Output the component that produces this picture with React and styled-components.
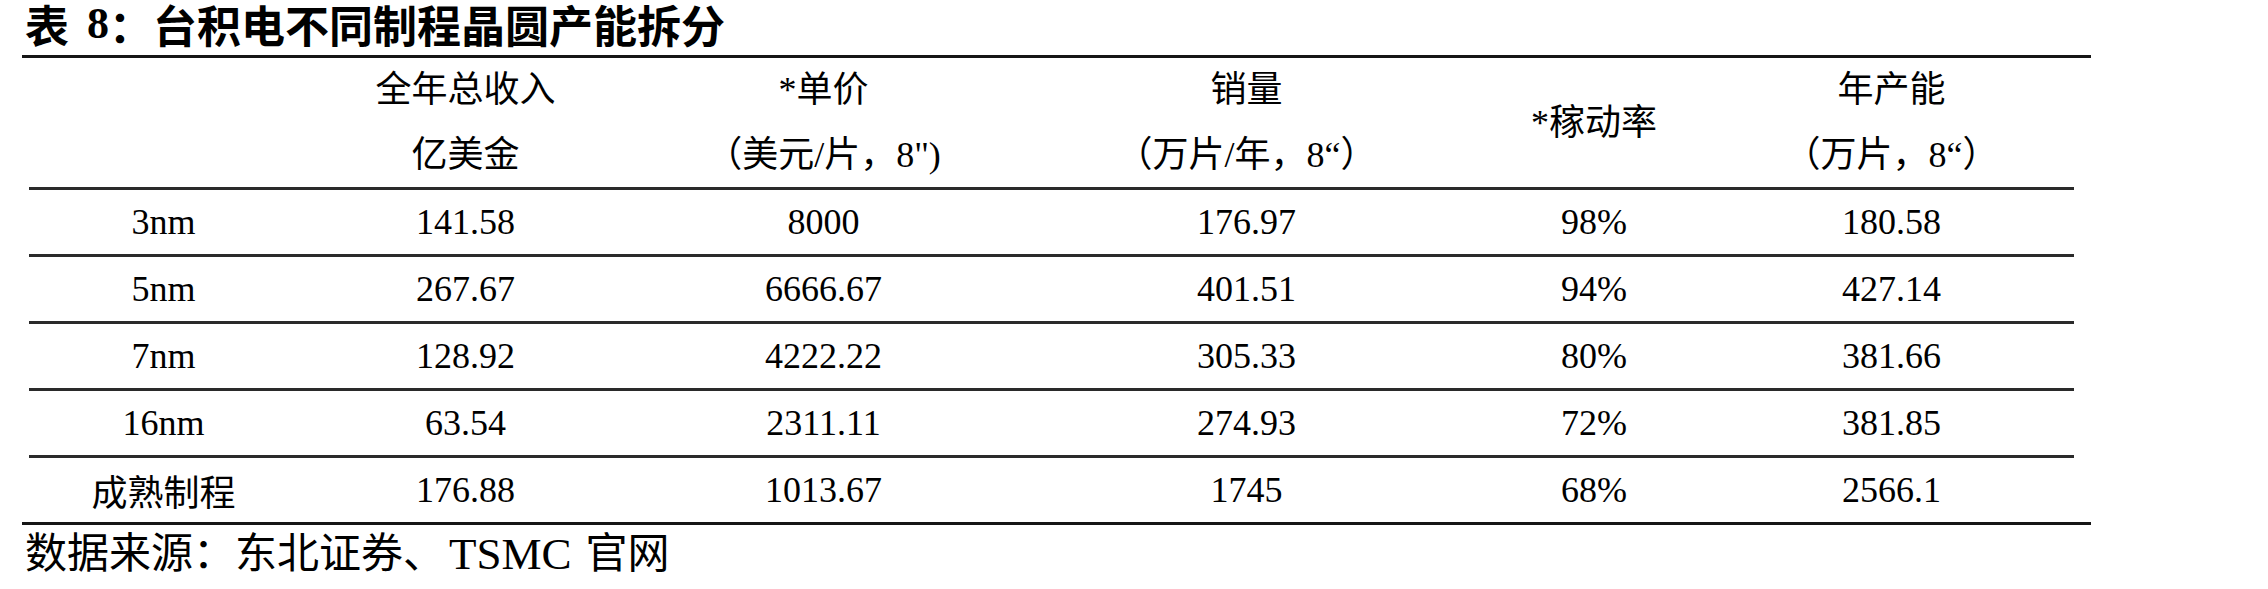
import React from "react";
import styled, { createGlobalStyle } from "styled-components";

const GlobalStyle = createGlobalStyle`
  html, body {
    margin: 0;
    padding: 0;
    background: #ffffff;
  }
  body {
    font-family: "Liberation Serif", "Noto Sans CJK SC", serif;
    color: #000000;
  }
`;

const COLS = "269px 335px 381px 465px 230px 365px";

const header = [
  { lines: [""] },
  { lines: ["全年总收入", "亿美金"] },
  { lines: ["*单价", "（美元/片，8\")"] },
  { lines: ["销量", "（万片/年，8“）"] },
  { lines: ["*稼动率"] },
  { lines: ["年产能", "（万片，8“）"] },
];

const rows = [
  ["3nm", "141.58", "8000", "176.97", "98%", "180.58"],
  ["5nm", "267.67", "6666.67", "401.51", "94%", "427.14"],
  ["7nm", "128.92", "4222.22", "305.33", "80%", "381.66"],
  ["16nm", "63.54", "2311.11", "274.93", "72%", "381.85"],
  ["成熟制程", "176.88", "1013.67", "1745", "68%", "2566.1"],
];

export default function App() {
  return (
    <Page>
      <GlobalStyle />
      <Title>
        表 <Num>8</Num>：台积电不同制程晶圆产能拆分
      </Title>
      <Rule />
      <Table>
        <HeadRow>
          {header.map((h, i) => (
            <HeadCell key={i}>
              {h.lines.map((l, j) => (
                <span key={j}>{l}</span>
              ))}
            </HeadCell>
          ))}
        </HeadRow>
        {rows.map((r, i) => (
          <Row key={r[0]} last={i === rows.length - 1}>
            {r.map((v, j) => (
              <Cell key={j}>{v}</Cell>
            ))}
          </Row>
        ))}
      </Table>
      <Rule />
      <Source>
        数据来源：东北证券、<Latin>TSMC</Latin>官网
      </Source>
    </Page>
  );
}

const Page = styled.div`
  width: 2268px;
  height: 589px;
  overflow: hidden;
`;

const Title = styled.h1`
  margin: 0;
  height: 55px;
  padding: 0 0 8px 25px;
  box-sizing: border-box;
  display: flex;
  align-items: center;
  font-family: "Noto Sans CJK SC", sans-serif;
  font-weight: 700;
  font-size: 44px;
  line-height: 44px;
  white-space: pre;
`;

const Num = styled.span`
  font-family: "Liberation Serif", serif;
  font-weight: 700;
  margin-left: 8px;
`;

const Rule = styled.div`
  margin-left: 22px;
  width: 2069px;
  height: 3px;
  background: #161616;
`;

const Table = styled.div`
  margin-left: 29px;
  width: 2045px;
`;

const HeadRow = styled.div`
  display: grid;
  grid-template-columns: ${COLS};
  height: 132px;
  box-sizing: border-box;
  border-bottom: 3px solid #2a2a2a;
`;

const HeadCell = styled.div`
  display: flex;
  flex-direction: column;
  align-items: center;
  justify-content: center;
  font-size: 36px;
  line-height: 65px;
  white-space: nowrap;
`;

const Row = styled.div`
  display: grid;
  grid-template-columns: ${COLS};
  height: ${(p) => (p.last ? "64px" : "67px")};
  box-sizing: border-box;
  border-bottom: ${(p) => (p.last ? "none" : "3px solid #2a2a2a")};
`;

const Cell = styled.div`
  display: flex;
  align-items: center;
  justify-content: center;
  font-size: 36px;
  white-space: nowrap;
`;

const Source = styled.div`
  margin-left: 25px;
  height: 58px;
  display: flex;
  align-items: center;
  font-size: 42px;
  line-height: 42px;
  white-space: pre;
`;

const Latin = styled.span`
  font-family: "Liberation Serif", serif;
  font-size: 45px;
  margin: 0 14px 0 4px;
`;
